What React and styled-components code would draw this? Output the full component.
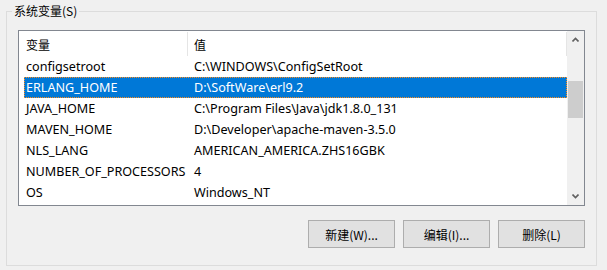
import styled, { createGlobalStyle } from "styled-components";

const GlobalStyle = createGlobalStyle`
    body {
        margin: 0;
        background: #f0f0f0;
        font-family: "Noto Sans", "Noto Sans CJK SC", sans-serif;
        font-size: 12.6px;
        color: #000;
    }
`

const vars = [
    ["configsetroot", "C:\\WINDOWS\\ConfigSetRoot"],
    ["ERLANG_HOME", "D:\\SoftWare\\erl9.2"],
    ["JAVA_HOME", "C:\\Program Files\\Java\\jdk1.8.0_131"],
    ["MAVEN_HOME", "D:\\Developer\\apache-maven-3.5.0"],
    ["NLS_LANG", "AMERICAN_AMERICA.ZHS16GBK"],
    ["NUMBER_OF_PROCESSORS", "4"],
    ["OS", "Windows_NT"],
]

//styled
const Window = styled.div`
    width: 607px;
    height: 270px;
    padding: 4px 0 0 6px;
    box-sizing: border-box;
`
const GroupBox = styled.fieldset`
    width: 591px;
    height: 262px;
    box-sizing: border-box;
    margin: 0;
    padding: 0 11px 0 11px;
    border: 1px solid #dcdcdc;
    display: flex;
    flex-direction: column;
`
const GroupTitle = styled.legend`
    padding: 0 2px;
    margin-left: -6px;
    line-height: 14px;
    font-size: 12px;
    font-family: "Noto Sans CJK SC", sans-serif;
`
const ListBox = styled.div`
    margin-top: 12px;
    width: 567px;
    height: 176px;
    box-sizing: border-box;
    border: 1px solid #828790;
    background: #fff;
    display: flex;
`
const Table = styled.div`
    flex: 1;
    display: flex;
    flex-direction: column;
`
const Header = styled.div`
    height: 25px;
    display: grid;
    grid-template-columns: 169px 1fr;
`
const HeaderCell = styled.div`
    display: flex;
    align-items: center;
    padding-left: ${p => p.$pad}px;
    border-right: 1px solid #e5e5e5;
    margin: 1px 0 0;
    font-size: 12px;
    font-family: "Noto Sans CJK SC", sans-serif;
`
const Row = styled.div`
    height: 21px;
    margin-left: 5px;
    box-sizing: border-box;
    display: grid;
    grid-template-columns: 168px 1fr;
    align-items: center;
    background: ${p => p.$selected ? "#0078d7" : "transparent"};
    color: ${p => p.$selected ? "#fff" : "#000"};
    outline: ${p => p.$selected ? "1px dotted #ff8c1a" : "none"};
    outline-offset: -1px;
`
const Cell = styled.div`
    padding-left: 2px;
    white-space: nowrap;
    line-height: 20px;
`
const ScrollBar = styled.div`
    width: 17px;
    background: #f0f0f0;
    display: flex;
    flex-direction: column;
`
const ArrowButton = styled.div`
    height: 17px;
    display: flex;
    align-items: center;
    justify-content: center;
`
const Track = styled.div`
    flex: 1;
    padding: 0 1px;
`
const Thumb = styled.div`
    margin-top: 33px;
    height: 37px;
    background: #cdcdcd;
`
const ButtonBar = styled.div`
    margin-top: 14px;
    width: 567px;
    display: flex;
    justify-content: flex-end;
    gap: 8px;
`
const Button = styled.button`
    width: 87px;
    height: 28px;
    background: #e1e1e1;
    border: 1px solid #adadad;
    font-family: "Noto Sans CJK SC", sans-serif;
    font-size: 12px;
    color: #000;
    padding: 0;
`

const Chevron = ({ down }) => (
    <svg width="7" height="5" viewBox="0 0 7 5">
        <path
            d={down ? "M0.5 0.5 L3.5 3.5 L6.5 0.5" : "M0.5 4.5 L3.5 1.5 L6.5 4.5"}
            fill="none"
            stroke="#606060"
            strokeWidth="1.6"
        />
    </svg>
)

export default function App() {
    return (
        <>
            <GlobalStyle />
            <Window>
                <GroupBox>
                    <GroupTitle>系统变量(S)</GroupTitle>
                    <ListBox>
                        <Table>
                            <Header>
                                <HeaderCell $pad={7}>变量</HeaderCell>
                                <HeaderCell $pad={6}>值</HeaderCell>
                            </Header>
                            {vars.map(([name, value]) => (
                                <Row key={name} $selected={name === "ERLANG_HOME"}>
                                    <Cell>{name}</Cell>
                                    <Cell>{value}</Cell>
                                </Row>
                            ))}
                        </Table>
                        <ScrollBar>
                            <ArrowButton><Chevron /></ArrowButton>
                            <Track><Thumb /></Track>
                            <ArrowButton><Chevron down /></ArrowButton>
                        </ScrollBar>
                    </ListBox>
                    <ButtonBar>
                        <Button>新建(W)...</Button>
                        <Button>编辑(I)...</Button>
                        <Button>删除(L)</Button>
                    </ButtonBar>
                </GroupBox>
            </Window>
        </>
    )
}
